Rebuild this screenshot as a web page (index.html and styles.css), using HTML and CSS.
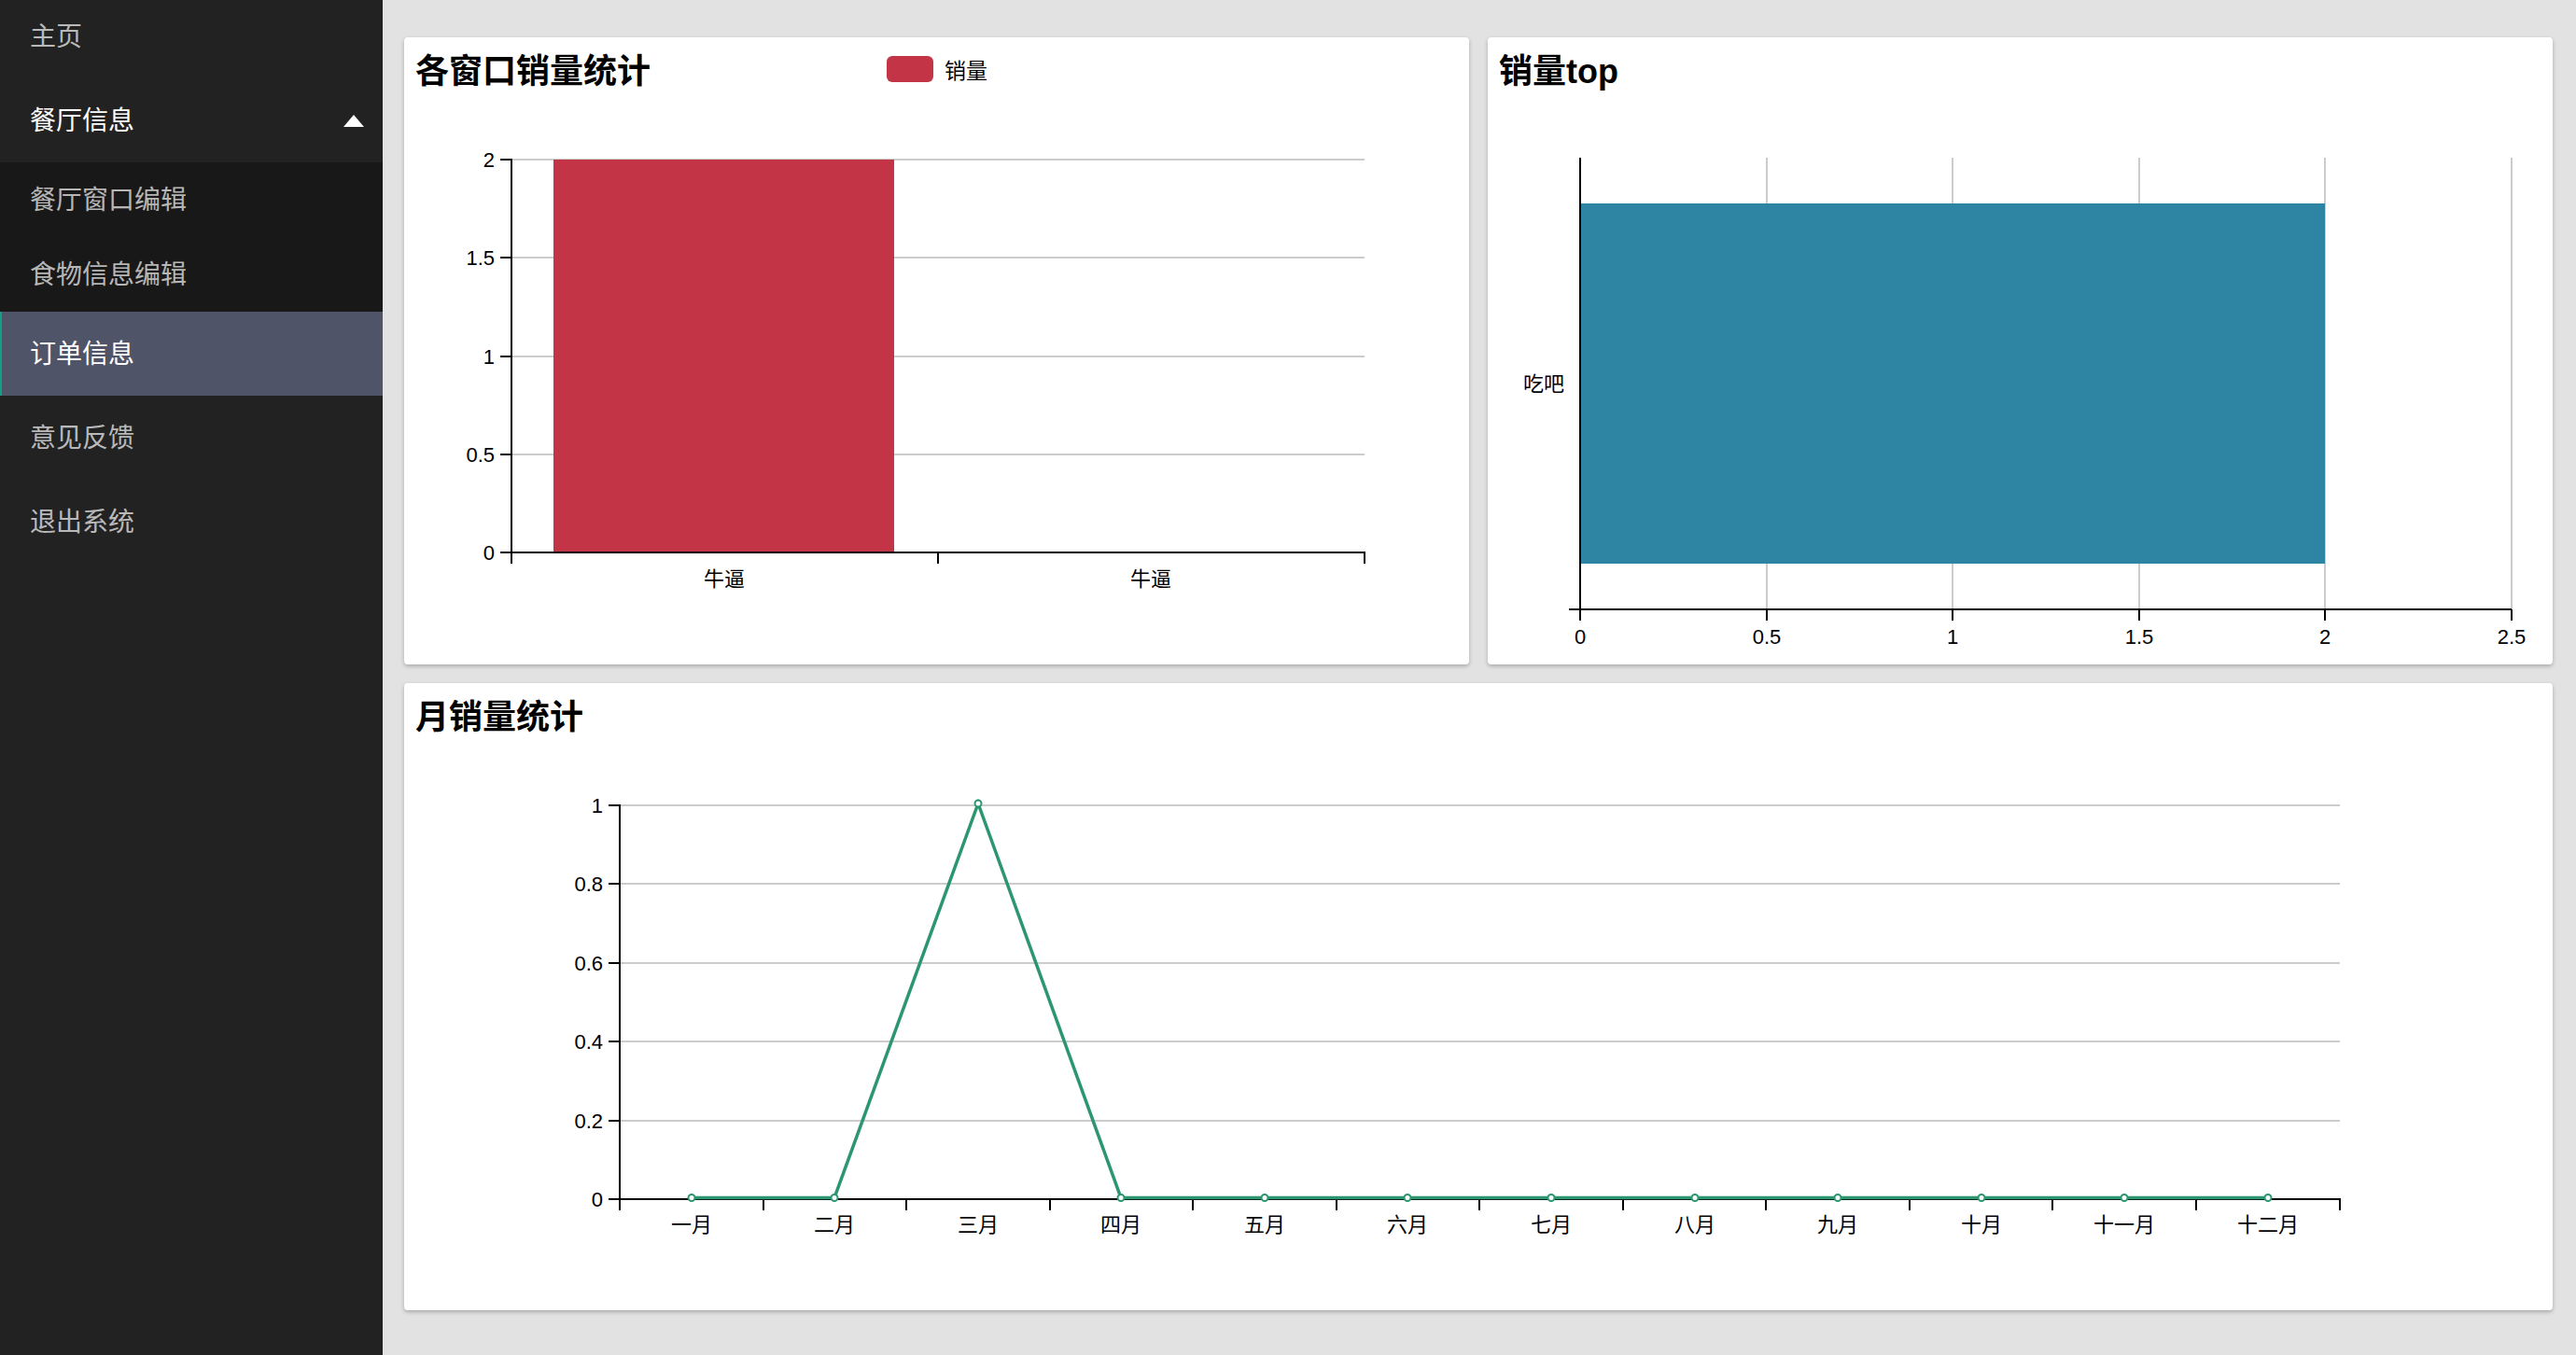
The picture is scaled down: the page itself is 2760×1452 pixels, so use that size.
FILE: index.html
```html
<!DOCTYPE html>
<html lang="zh-CN">
<head>
    <meta charset="UTF-8">
    <meta name="viewport" content="width=device-width, initial-scale=1.0">
    <title>订单信息</title>
    <link rel="stylesheet" href="styles.css">
</head>
<body>
    <aside class="sidebar">
        <ul class="nav">
            <li class="nav-item"><a href="#">主页</a></li>
            <li class="nav-item open">
                <a href="#">餐厅信息<span class="caret"></span></a>
                <ul class="sub-nav">
                    <li><a href="#">餐厅窗口编辑</a></li>
                    <li><a href="#">食物信息编辑</a></li>
                </ul>
            </li>
            <li class="nav-item active"><a href="#">订单信息</a></li>
            <li class="nav-item"><a href="#">意见反馈</a></li>
            <li class="nav-item"><a href="#">退出系统</a></li>
        </ul>
    </aside>

    <main class="main">
        <div class="charts">
            <!-- 各窗口销量 -->
            <section class="card">
                <div class="card-header">
                    <h2>各窗口销量统计</h2>
                    <div class="legend"><span class="swatch"></span>销量</div>
                </div>
                <svg class="chart" width="1141" height="598">
                    <g class="grid">
                        <line x1="115" y1="57" x2="1029" y2="57"/>
                        <line x1="115" y1="162" x2="1029" y2="162"/>
                        <line x1="115" y1="268" x2="1029" y2="268"/>
                        <line x1="115" y1="373" x2="1029" y2="373"/>
                    </g>
                    <rect class="bar-red" x="160" y="57" width="365" height="421"/>
                    <g class="axis">
                        <path d="M103,57H115V478H103"/>
                        <line x1="103" y1="162" x2="115" y2="162"/>
                        <line x1="103" y1="268" x2="115" y2="268"/>
                        <line x1="103" y1="373" x2="115" y2="373"/>
                        <path d="M115,490V478H1029V490"/>
                        <line x1="572" y1="478" x2="572" y2="490"/>
                    </g>
                    <g class="labels-y">
                        <text x="97" y="65">2</text>
                        <text x="97" y="170">1.5</text>
                        <text x="97" y="276">1</text>
                        <text x="97" y="381">0.5</text>
                        <text x="97" y="486">0</text>
                    </g>
                    <g class="labels-x">
                        <text x="343" y="514">牛逼</text>
                        <text x="800" y="514">牛逼</text>
                    </g>
                </svg>
            </section>

            <!-- 销量 top -->
            <section class="card">
                <div class="card-header">
                    <h2>销量top</h2>
                </div>
                <svg class="chart" width="1141" height="598">
                    <g class="grid">
                        <line x1="299" y1="55" x2="299" y2="539"/>
                        <line x1="498" y1="55" x2="498" y2="539"/>
                        <line x1="698" y1="55" x2="698" y2="539"/>
                        <line x1="897" y1="55" x2="897" y2="539"/>
                        <line x1="1097" y1="55" x2="1097" y2="539"/>
                    </g>
                    <rect class="bar-blue" x="99" y="104" width="798" height="386"/>
                    <g class="axis">
                        <path d="M99,55V539"/>
                        <path d="M87,539H1097"/>
                        <line x1="99" y1="539" x2="99" y2="551"/>
                        <line x1="299" y1="539" x2="299" y2="551"/>
                        <line x1="498" y1="539" x2="498" y2="551"/>
                        <line x1="698" y1="539" x2="698" y2="551"/>
                        <line x1="897" y1="539" x2="897" y2="551"/>
                        <line x1="1097" y1="539" x2="1097" y2="551"/>
                    </g>
                    <g class="labels-y">
                        <text x="82" y="305">吃吧</text>
                    </g>
                    <g class="labels-x">
                        <text x="99" y="576">0</text>
                        <text x="299" y="576">0.5</text>
                        <text x="498" y="576">1</text>
                        <text x="698" y="576">1.5</text>
                        <text x="897" y="576">2</text>
                        <text x="1097" y="576">2.5</text>
                    </g>
                </svg>
            </section>

            <!-- 月销量 -->
            <section class="card wide">
                <div class="card-header">
                    <h2>月销量统计</h2>
                </div>
                <svg class="chart" width="2302" height="598">
                    <g class="grid">
                        <line x1="231" y1="57" x2="2074" y2="57"/>
                        <line x1="231" y1="141" x2="2074" y2="141"/>
                        <line x1="231" y1="226" x2="2074" y2="226"/>
                        <line x1="231" y1="310" x2="2074" y2="310"/>
                        <line x1="231" y1="395" x2="2074" y2="395"/>
                    </g>
                    <g class="axis">
                        <path d="M219,57H231V479H219"/>
                        <line x1="219" y1="141" x2="231" y2="141"/>
                        <line x1="219" y1="226" x2="231" y2="226"/>
                        <line x1="219" y1="310" x2="231" y2="310"/>
                        <line x1="219" y1="395" x2="231" y2="395"/>
                        <path d="M231,491V479H2074V491"/>
                        <line x1="385" y1="479" x2="385" y2="491"/>
                        <line x1="538" y1="479" x2="538" y2="491"/>
                        <line x1="692" y1="479" x2="692" y2="491"/>
                        <line x1="845" y1="479" x2="845" y2="491"/>
                        <line x1="999" y1="479" x2="999" y2="491"/>
                        <line x1="1152" y1="479" x2="1152" y2="491"/>
                        <line x1="1306" y1="479" x2="1306" y2="491"/>
                        <line x1="1459" y1="479" x2="1459" y2="491"/>
                        <line x1="1613" y1="479" x2="1613" y2="491"/>
                        <line x1="1766" y1="479" x2="1766" y2="491"/>
                        <line x1="1920" y1="479" x2="1920" y2="491"/>
                    </g>
                    <polyline class="line" points="308,477.5 461,477.5 615,55 768,477.5 922,477.5 1075,477.5 1229,477.5 1383,477.5 1536,477.5 1690,477.5 1843,477.5 1997,477.5"/>
                    <g class="dots">
                        <circle cx="308" cy="477.5" r="3.5"/>
                        <circle cx="461" cy="477.5" r="3.5"/>
                        <circle cx="615" cy="55" r="3.5"/>
                        <circle cx="768" cy="477.5" r="3.5"/>
                        <circle cx="922" cy="477.5" r="3.5"/>
                        <circle cx="1075" cy="477.5" r="3.5"/>
                        <circle cx="1229" cy="477.5" r="3.5"/>
                        <circle cx="1383" cy="477.5" r="3.5"/>
                        <circle cx="1536" cy="477.5" r="3.5"/>
                        <circle cx="1690" cy="477.5" r="3.5"/>
                        <circle cx="1843" cy="477.5" r="3.5"/>
                        <circle cx="1997" cy="477.5" r="3.5"/>
                    </g>
                    <g class="labels-y">
                        <text x="213" y="65">1</text>
                        <text x="213" y="149">0.8</text>
                        <text x="213" y="234">0.6</text>
                        <text x="213" y="318">0.4</text>
                        <text x="213" y="403">0.2</text>
                        <text x="213" y="487">0</text>
                    </g>
                    <g class="labels-x">
                        <text x="308" y="514">一月</text>
                        <text x="461" y="514">二月</text>
                        <text x="615" y="514">三月</text>
                        <text x="768" y="514">四月</text>
                        <text x="922" y="514">五月</text>
                        <text x="1075" y="514">六月</text>
                        <text x="1229" y="514">七月</text>
                        <text x="1383" y="514">八月</text>
                        <text x="1536" y="514">九月</text>
                        <text x="1690" y="514">十月</text>
                        <text x="1843" y="514">十一月</text>
                        <text x="1997" y="514">十二月</text>
                    </g>
                </svg>
            </section>
        </div>
    </main>
</body>
</html>
```

FILE: styles.css
```css
* {
    box-sizing: border-box;
}

body {
    margin: 0;
    display: flex;
    min-height: 100vh;
    font-family: "Liberation Sans", "Noto Sans CJK SC", sans-serif;
    background-color: #e2e2e2;
    color: #000;
}

a {
    color: inherit;
    text-decoration: none;
}

/* sidebar */
.sidebar {
    width: 410px;
    flex: none;
    background-color: #222222;
    overflow: hidden;
}

.nav,
.sub-nav {
    list-style: none;
    margin: 0;
    padding: 0;
}

.nav {
    margin-top: -6px;
}

.nav-item > a {
    display: flex;
    align-items: center;
    justify-content: space-between;
    height: 90px;
    padding: 0 20px 4px 32px;
    font-size: 28px;
    color: rgba(255, 255, 255, 0.7);
}

.nav-item.open > a {
    color: #fff;
}

.nav-item.active > a {
    color: #fff;
    background-color: #4f5468;
    border-left: 2px solid #12a08a;
    padding-left: 30px;
}

.caret {
    width: 0;
    height: 0;
    margin-top: 4px;
    border-left: 11.5px solid transparent;
    border-right: 11.5px solid transparent;
    border-bottom: 13px solid #fff;
}

.sub-nav {
    background-color: #181818;
}

.sub-nav a {
    display: flex;
    align-items: center;
    height: 80px;
    padding: 0 0 4px 32px;
    font-size: 28px;
    color: rgba(255, 255, 255, 0.7);
}

/* main */
.main {
    flex: 1;
    padding: 40px 25px 0 23px;
}

.charts {
    display: grid;
    grid-template-columns: 1fr 1fr;
    gap: 20px;
}

.card {
    height: 672px;
    background: #fff;
    border-radius: 4px;
    box-shadow: 0 2px 4px rgba(0, 0, 0, 0.25);
    overflow: hidden;
}

.card.wide {
    grid-column: span 2;
}

.card-header {
    display: flex;
    align-items: center;
    height: 74px;
    padding: 0 12px;
}

.card-header h2 {
    margin: 0;
    font-size: 36px;
    font-weight: bold;
    line-height: 74px;
}

.legend {
    display: flex;
    align-items: center;
    gap: 12px;
    margin-left: 253px;
    margin-bottom: 6px;
    font-size: 23px;
}

.swatch {
    width: 50px;
    height: 28px;
    border-radius: 6px;
    background-color: #c33447;
}

/* charts */
.chart {
    display: block;
}

.chart text {
    font-family: "Liberation Sans", "Noto Sans CJK SC", sans-serif;
    font-size: 22px;
    fill: #000;
}

.labels-y text {
    text-anchor: end;
}

.labels-x text {
    text-anchor: middle;
}

.grid line {
    stroke: #cccccc;
    stroke-width: 2;
}

.axis path,
.axis line {
    fill: none;
    stroke: #000;
    stroke-width: 2;
}

.bar-red {
    fill: #c33447;
}

.bar-blue {
    fill: #2e84a3;
}

.line {
    fill: none;
    stroke: #2c9670;
    stroke-width: 3.5;
}

.dots circle {
    fill: #fff;
    stroke: #2c9670;
    stroke-width: 2;
}
```
